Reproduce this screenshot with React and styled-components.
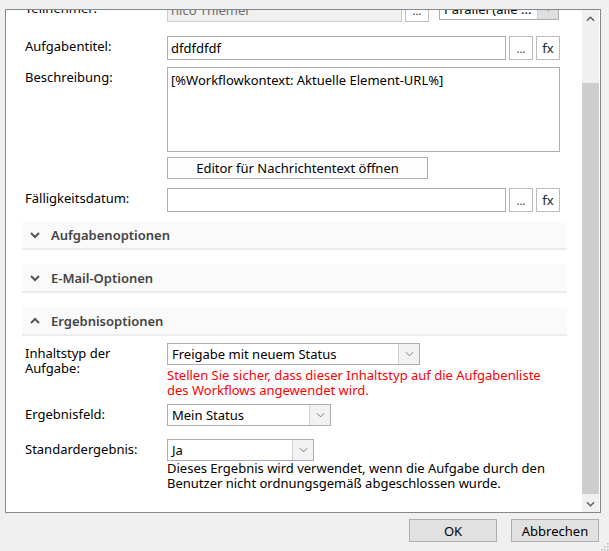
import React from 'react';
import styled, { createGlobalStyle } from "styled-components";

const GlobalStyle = createGlobalStyle`
    html, body {
        margin: 0;
        padding: 0;
        background: #f0f0f0;
    }
    body {
        font-family: "Noto Sans", "Open Sans", sans-serif;
        font-size: 13px;
        color: #000;
    }
`;

function Chevron(props) {
    const points = props.up ? "1,6 5,2 9,6" : "1,2 5,6 9,2";
    return (
        <svg width={props.size || 10} height={8} viewBox="0 0 10 8">
            <polyline points={points} fill="none" stroke={props.color || "#555"} strokeWidth={props.weight || 2} />
        </svg>
    );
}

function Select(props) {
    return (
        <SelectBox width={props.width}>
            <SelectText>{props.value}</SelectText>
            <SelectArrow gray={props.gray}>
                <Chevron size={9} weight={1} color="#707070" />
            </SelectArrow>
        </SelectBox>
    );
}

function Section(props) {
    return (
        <SectionHeader>
            <Chevron up={props.open} />
            <span>{props.title}</span>
        </SectionHeader>
    );
}

function App() {
    return (
        <Dialog>
            <GlobalStyle />
            <Panel>
                <Viewport>
                    <Content>
                        <Row>
                            <Label>Teilnehmer:</Label>
                            <Controls>
                                <TextBox width={235} disabled>hico Thiemer</TextBox>
                                <SmallButton>...</SmallButton>
                                <Spacer width={4} />
                                <Select width={120} gray value="Parallel (alle ..." />
                            </Controls>
                        </Row>
                        <Row top={14}>
                            <Label>Aufgabentitel:</Label>
                            <Controls>
                                <TextBox width={339}>dfdfdfdf</TextBox>
                                <SmallButton>...</SmallButton>
                                <SmallButton fx>fx</SmallButton>
                            </Controls>
                        </Row>
                        <Row top={7}>
                            <Label>Beschreibung:</Label>
                            <TextArea>[%Workflowkontext: Aktuelle Element-URL%]</TextArea>
                        </Row>
                        <Row top={5}>
                            <span />
                            <EditorButton>Editor für Nachrichtentext öffnen</EditorButton>
                        </Row>
                        <Row top={9}>
                            <Label>Fälligkeitsdatum:</Label>
                            <Controls>
                                <TextBox width={339}></TextBox>
                                <SmallButton>...</SmallButton>
                                <SmallButton fx>fx</SmallButton>
                            </Controls>
                        </Row>
                        <Sections>
                            <Section title="Aufgabenoptionen" />
                            <Section title="E-Mail-Optionen" />
                            <Section title="Ergebnisoptionen" open />
                        </Sections>
                        <Row top={7}>
                            <Label>Inhaltstyp der<br />Aufgabe:</Label>
                            <Stack>
                                <Select width={253} value="Freigabe mit neuem Status" />
                                <Note red>
                                    Stellen Sie sicher, dass dieser Inhaltstyp auf die Aufgabenliste<br />
                                    des Workflows angewendet wird.
                                </Note>
                            </Stack>
                        </Row>
                        <Row top={6}>
                            <Label>Ergebnisfeld:</Label>
                            <Select width={164} value="Mein Status" />
                        </Row>
                        <Row top={13}>
                            <Label>Standardergebnis:</Label>
                            <Stack>
                                <Select width={147} value="Ja" />
                                <Note top={0}>
                                    Dieses Ergebnis wird verwendet, wenn die Aufgabe durch den<br />
                                    Benutzer nicht ordnungsgemäß abgeschlossen wurde.
                                </Note>
                            </Stack>
                        </Row>
                    </Content>
                </Viewport>
                <ScrollBar>
                    <ScrollArrow><Chevron up size={9} weight={1.6} color="#606060" /></ScrollArrow>
                    <Track>
                        <Thumb />
                    </Track>
                    <ScrollArrow><Chevron size={9} weight={1.6} color="#606060" /></ScrollArrow>
                </ScrollBar>
            </Panel>
            <Footer>
                <DialogButton>OK</DialogButton>
                <DialogButton>Abbrechen</DialogButton>
            </Footer>
            <Grip>
                <svg width="9" height="9" viewBox="0 0 9 9">
                    {[[7, 1], [4, 4], [7, 4], [1, 7], [4, 7], [7, 7]].map(([x, y]) => (
                        <rect key={x + "-" + y} x={x} y={y} width="1.5" height="1.5" fill="#b8b8b8" />
                    ))}
                </svg>
            </Grip>
        </Dialog>
    );
}

const Dialog = styled.div`
    position: relative;
    width: 609px;
    height: 551px;
    box-sizing: border-box;
    padding: 9px 8px 0 5px;
    background: #f0f0f0;
    overflow: hidden;
`;

const Panel = styled.div`
    display: flex;
    height: 504px;
    box-sizing: border-box;
    border: 1px solid #828790;
    background: #fff;
`;

const Viewport = styled.div`
    flex: 1;
    overflow: hidden;
`;

const Content = styled.div`
    margin-top: -12px;
    padding: 0 0 0 19px;
`;

const Row = styled.div`
    display: grid;
    grid-template-columns: 142px auto;
    align-items: start;
    margin-top: ${props => props.top || 0}px;
`;

const Label = styled.div`
    padding-top: 3px;
    line-height: 15px;
    color: #000;
`;

const Controls = styled.div`
    display: flex;
    align-items: flex-start;
    gap: 3px;
`;

const Spacer = styled.div`
    width: ${props => props.width}px;
`;

const TextBox = styled.div`
    width: ${props => props.width}px;
    height: 24px;
    box-sizing: border-box;
    border: 1px solid ${props => props.disabled ? "#cccccc" : "#abadb3"};
    background: ${props => props.disabled ? "#f0f0f0" : "#fff"};
    color: ${props => props.disabled ? "#6d6d6d" : "#000"};
    padding: 3px 3px 0;
    line-height: 16px;
    white-space: nowrap;
    overflow: hidden;
`;

const SmallButton = styled.div`
    width: 24px;
    height: 24px;
    box-sizing: border-box;
    border: 1px solid #bcbcbc;
    background: #fff;
    display: flex;
    align-items: ${props => props.fx ? "center" : "flex-end"};
    justify-content: center;
    padding-bottom: ${props => props.fx ? 0 : 5}px;
    font-size: ${props => props.fx ? 13 : 11}px;
    line-height: 10px;
    color: #222;
`;

const TextArea = styled.div`
    width: 393px;
    height: 85px;
    box-sizing: border-box;
    border: 1px solid #abadb3;
    padding: 4px 3px;
    line-height: 16px;
`;

const EditorButton = styled.div`
    width: 261px;
    height: 22px;
    box-sizing: border-box;
    border: 1px solid #adadad;
    background: #fdfdfd;
    display: flex;
    align-items: center;
    justify-content: center;
    color: #000;
`;

const Sections = styled.div`
    margin: 9px 15px 0 -3px;
    display: flex;
    flex-direction: column;
    gap: 14px;
`;

const SectionHeader = styled.div`
    height: 29px;
    box-sizing: border-box;
    background: #fafafa;
    border-bottom: 2px solid #ececec;
    display: flex;
    align-items: center;
    gap: 11px;
    padding-left: 8px;
    font-size: 13px;
    font-weight: 600;
    color: #444;
    svg {
        margin-top: 1px;
    }
`;

const Stack = styled.div`
    display: flex;
    flex-direction: column;
`;

const Note = styled.div`
    margin-top: ${props => props.top === undefined ? 3 : props.top}px;
    line-height: 15px;
    white-space: nowrap;
    color: ${props => props.red ? "#ff0000" : "#000"};
`;

const SelectBox = styled.div`
    width: ${props => props.width}px;
    height: 22px;
    box-sizing: border-box;
    border: 1px solid #abadb3;
    background: #fff;
    display: flex;
    align-items: stretch;
`;

const SelectText = styled.div`
    flex: 1;
    padding: 2px 4px 0;
    line-height: 16px;
    white-space: nowrap;
    overflow: hidden;
`;

const SelectArrow = styled.div`
    width: 20px;
    border-left: 1px solid #d0d0d0;
    background: ${props => props.gray ? "#dedede" : "#f2f2f2"};
    display: flex;
    align-items: center;
    justify-content: center;
`;

const ScrollBar = styled.div`
    width: 17px;
    margin-right: 1px;
    background: #f0f0f0;
    display: flex;
    flex-direction: column;
`;

const ScrollArrow = styled.div`
    height: 17px;
    display: flex;
    align-items: center;
    justify-content: center;
`;

const Track = styled.div`
    flex: 1;
    padding: 56px 0 1px;
    display: flex;
    flex-direction: column;
`;

const Thumb = styled.div`
    flex: 1;
    background: #cdcdcd;
`;

const Footer = styled.div`
    display: flex;
    justify-content: flex-end;
    gap: 14px;
    padding: 6px 2px 0 0;
`;

const DialogButton = styled.div`
    width: 88px;
    height: 23px;
    box-sizing: border-box;
    border: 1px solid #adadad;
    background: #e1e1e1;
    display: flex;
    align-items: center;
    justify-content: center;
    font-size: 13px;
    color: #000;
`;

const Grip = styled.div`
    position: absolute;
    right: 0;
    bottom: 0;
    width: 9px;
    height: 9px;
    line-height: 0;
`;

export default App;
